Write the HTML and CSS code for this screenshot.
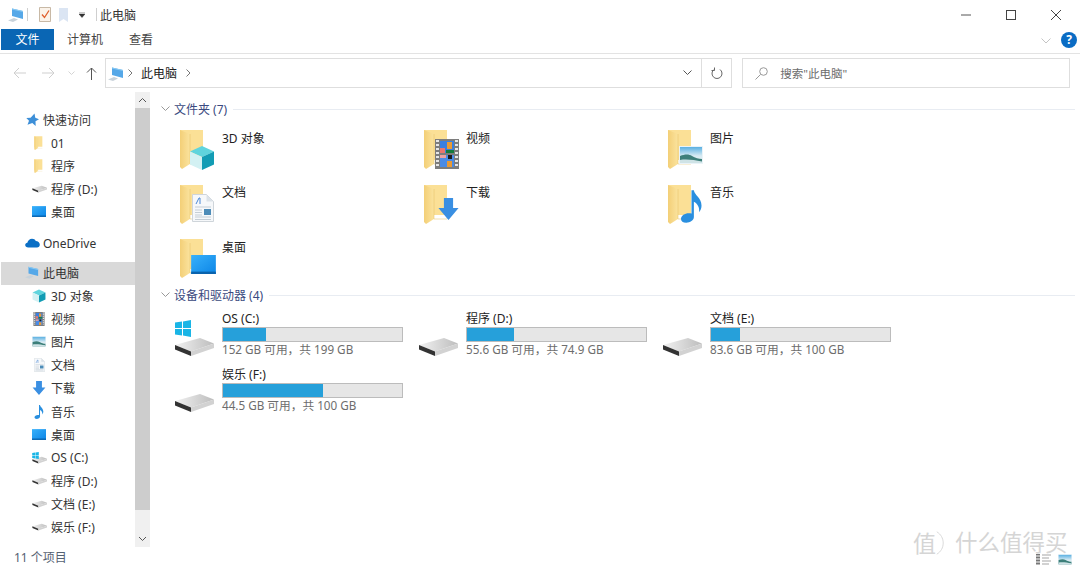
FILE: index.html
```html
<!DOCTYPE html>
<html lang="zh-CN">
<head>
<meta charset="utf-8">
<title>此电脑</title>
<link rel="stylesheet" href="styles.css">
</head>
<body>
<svg class="sprite" width="0" height="0" aria-hidden="true">
  <defs>
    <linearGradient id="gFolder" x1="0" y1="0" x2="1" y2="0"><stop offset="0" stop-color="#f3cf77"/><stop offset="1" stop-color="#fbe39e"/></linearGradient>
    <linearGradient id="gDrive" x1="0" y1="0" x2="1" y2="0"><stop offset="0" stop-color="#f2f2f2"/><stop offset="1" stop-color="#bdbdbd"/></linearGradient>
    <linearGradient id="gSky" x1="0" y1="0" x2="0" y2="1"><stop offset="0" stop-color="#5ab0e2"/><stop offset=".55" stop-color="#d6eaf2"/><stop offset="1" stop-color="#e8f1f2"/></linearGradient>
    <linearGradient id="gDesk" x1="0" y1="0" x2="1" y2="1"><stop offset="0" stop-color="#38b1fb"/><stop offset="1" stop-color="#0c85e6"/></linearGradient>
    <symbol id="folder" viewBox="0 0 24 40">
      <path d="M0 1h23v30H9L0 33z" fill="#fbe096"/>
      <path d="M0 1l10 4v30l-8 5-2-2z" fill="url(#gFolder)"/>
      <path d="M10 5v30H23" fill="none" stroke="#e3bd63" stroke-width=".5"/>
    </symbol>
    <symbol id="pc" viewBox="0 0 16 14">
      <path d="M4 .5l11 2.500v8L4 8z" fill="#56a8e8"/>
      <path d="M4 .5l11 2.500v1L4 1.500z" fill="#8ccbf3"/>
      <path d="M0 12.500l6-2.500 4 1.500-5 2.500z" fill="#c8d2da"/>
    </symbol>
    <symbol id="star" viewBox="0 0 14 14">
      <path d="M9 .5l.8 4.300 3.700 1.500-3.500 2 .2 4.700-3.400-3L2 11.800l1.500-4L.8 5l4.300-.3z" fill="#3d8fd8"/>
    </symbol>
    <symbol id="cloud" viewBox="0 0 16 10">
      <path d="M3.500 9.800C1.500 9.800.2 8.700.2 7.200c0-1.400 1-2.400 2.300-2.500C3 2.400 5 .5 7.500.5c1.800 0 3.300.9 4 2.300 2.200 0 4.300 1.800 4.300 4 0 1.700-1.300 3-3 3z" fill="#0b6fc5"/>
    </symbol>
    <symbol id="cube" viewBox="0 0 26 26">
      <path d="M13 1l12 5.500-12 5.500L1 6.500z" fill="#5fd4dd"/>
      <path d="M1 6.500l12 5.500v13L1 19.500z" fill="#d3f1f3"/>
      <path d="M25 6.500L13 12v13l12-5.500z" fill="#129cb4"/>
    </symbol>
    <symbol id="film" viewBox="0 0 24 30">
      <rect width="24" height="30" fill="#7d7d7d"/>
      <path d="M1 1h3v2H1zM1 5h3v2H1zM1 9h3v2H1zM1 13h3v2H1zM1 17h3v2H1zM1 21h3v2H1zM1 25h3v2H1zM20 1h3v2h-3zM20 5h3v2h-3zM20 9h3v2h-3zM20 13h3v2h-3zM20 17h3v2h-3zM20 21h3v2h-3zM20 25h3v2h-3z" fill="#e6e6e6"/>
      <rect x="5" y="2" width="14" height="12" fill="#3a7fe0"/>
      <rect x="5" y="16" width="14" height="12" fill="#4a8be6"/>
      <path d="M5 9h5v5H5z" fill="#e8766c"/><path d="M12 3h5v7h-5zM12 22h5v6h-5z" fill="#e99a35"/><path d="M11 11h8v3h-8z" fill="#127a3c"/><path d="M13 16h4v4h-4z" fill="#1c1c1c"/><path d="M5 16h6v3H5z" fill="#eba0a0"/>
    </symbol>
    <symbol id="picture" viewBox="0 0 24 18">
      <rect width="24" height="18" fill="#eaf3f8"/>
      <rect x="1" y="1" width="22" height="16" fill="url(#gSky)"/>
      <path d="M1 10c5-2 9-2 12 0s7 3 10 3v4H1z" fill="#3d7f7a"/>
      <path d="M1 14c7-1 14 0 22 1.500V17H1z" fill="#cfe3e6"/>
    </symbol>
    <symbol id="doc" viewBox="0 0 22 28">
      <path d="M.5.5h14l7 7v20H.500z" fill="#f6f8fa" stroke="#cfd5da"/>
      <path d="M14.500.5v7h7z" fill="#dbe2e8"/>
      <path d="M3 13h16M3 23h16M3 25.500h16" stroke="#c5ced6"/>
      <rect x="12" y="15" width="7" height="6" fill="#4d8cb8"/>
      <path d="M3 16h7M3 18.500h7M3 21h7" stroke="#c5ced6"/>
      <path d="M4 10l3-6h1v6" fill="none" stroke="#4a88d6"/>
    </symbol>
    <symbol id="down" viewBox="0 0 22 24">
      <path d="M6 0h10v11h6L11 24 0 11h6z" fill="#3a8fe2"/>
    </symbol>
    <symbol id="note" viewBox="0 0 22 34">
      <path d="M11 0h2.500c.5 5 8 8 8 16 0 3-1 5-2.500 7 .5-5-1.500-9-5.500-11v16c0 3.500-4 6-8 6-3.500 0-5.500-2-5.500-4 0-3.500 4-6 8-6 1 0 2 .1 3 .4z" fill="#2a8fdf"/>
    </symbol>
    <symbol id="desk" viewBox="0 0 26 20">
      <rect width="26" height="20" fill="url(#gDesk)"/>
      <path d="M0 17.500h26V20H0z" fill="#0a63ad"/>
    </symbol>
    <symbol id="drive" viewBox="0 0 40 20">
      <path d="M1 8l25-7 14 5.500-23 8z" fill="url(#gDrive)"/>
      <path d="M1 8l16 6.500V19L1 12.500z" fill="#333"/>
      <path d="M17 14.500l23-8V11l-23 8z" fill="#d2d2d2"/>
    </symbol>
    <symbol id="win" viewBox="0 0 16 17">
      <path d="M0 2.500L7 1.500V8H0zM8 1.400L16 0v8H8zM0 9h7v6.500L0 14.500zM8 9h8v8l-8-1.400z" fill="#19b5e6"/>
    </symbol>
    <symbol id="check" viewBox="0 0 12 15">
      <path d="M.5.500h11v14H.500z" fill="#fbf3ea" stroke="#c8b9a6"/>
      <path d="M3 7.500l2.500 3L10 3.500" fill="none" stroke="#df5f2c" stroke-width="1.300"/>
    </symbol>
    <symbol id="pin" viewBox="0 0 10 14">
      <path d="M0 0h9v14l-4.500-3L0 14z" fill="#dbe5f3"/>
    </symbol>
  </defs>
</svg>

<div class="app">
  <header class="titlebar">
    <svg class="i-pc-title"><use href="#pc"/></svg>
    <span class="qsep"></span>
    <svg class="i-check"><use href="#check"/></svg>
    <svg class="i-pin"><use href="#pin"/></svg>
    <svg class="i-caret" viewBox="0 0 6 6"><path d="M0 0h6M0 2h6L3 5.500z" fill="#333" stroke="#333" stroke-width=".5"/></svg>
    <span class="qsep qsep-2"></span>
    <span class="title">此电脑</span>
    <div class="winbtns">
      <svg class="wb" viewBox="0 0 10 10"><path d="M0 5h10" stroke="#555" fill="none"/></svg>
      <svg class="wb" viewBox="0 0 10 10"><rect x=".5" y=".5" width="9" height="9" stroke="#444" fill="none"/></svg>
      <svg class="wb" viewBox="0 0 10 10"><path d="M0 0l10 10M10 0L0 10" stroke="#444" fill="none"/></svg>
    </div>
  </header>

  <nav class="ribbon">
    <span class="tab tab-file">文件</span>
    <span class="tab tab-computer">计算机</span>
    <span class="tab tab-view">查看</span>
    <svg class="ribbon-chev" viewBox="0 0 10 6"><path d="M.5.500L5 5 9.500.500" fill="none" stroke="#c4c4c4"/></svg>
    <span class="help">?</span>
  </nav>

  <div class="addr-row">
    <svg class="nav-ic back" viewBox="0 0 13 12"><path d="M13 6H1M6 1L1 6l5 5" fill="none" stroke="#cfcfcf"/></svg>
    <svg class="nav-ic fwd" viewBox="0 0 13 12"><path d="M0 6h12M7 1l5 5-5 5" fill="none" stroke="#cfcfcf"/></svg>
    <svg class="nav-ic hist" viewBox="0 0 7 5"><path d="M.5.500l3 3 3-3" fill="none" stroke="#d4d4d4"/></svg>
    <svg class="nav-ic up" viewBox="0 0 11 13"><path d="M5.500 13V1M1 5.500L5.500 1 10 5.500" fill="none" stroke="#555"/></svg>
    <div class="addr">
      <svg class="i-pc-addr"><use href="#pc"/></svg>
      <svg class="crumb-chev" viewBox="0 0 5 8"><path d="M.5.500L4 4 .5 7.500" fill="none" stroke="#777"/></svg>
      <span class="crumb">此电脑</span>
      <svg class="crumb-chev" viewBox="0 0 5 8"><path d="M.5.500L4 4 .5 7.500" fill="none" stroke="#777"/></svg>
      <svg class="addr-drop" viewBox="0 0 9 6"><path d="M.5.500L4.500 4.500 8.500.500" fill="none" stroke="#555"/></svg>
      <div class="refresh">
        <svg viewBox="0 0 12 13" width="12" height="13"><path d="M3 2.500a5 5 0 1 0 6 0M3.500 .5v3h-3" fill="none" stroke="#666"/></svg>
      </div>
    </div>
    <div class="search">
      <svg viewBox="0 0 13 13" width="13" height="13"><circle cx="8.500" cy="4.500" r="3.800" fill="none" stroke="#999"/><path d="M5.500 7.500L.5 12.500" stroke="#999"/></svg>
      <span>搜索"此电脑"</span>
    </div>
  </div>

  <div class="main">
    <aside class="side">
      <ul class="tree">
        <li class="row l1"><svg class="ic"><use href="#star"/></svg>快速访问</li>
        <li class="row l2"><svg class="ic"><use href="#folder" x="2" width="9" height="14"/></svg>01</li>
        <li class="row l2"><svg class="ic"><use href="#folder" x="2" width="9" height="14"/></svg>程序</li>
        <li class="row l2"><svg class="ic"><use href="#drive" y="3" width="15" height="8"/></svg>程序 (D:)</li>
        <li class="row l2"><svg class="ic"><use href="#desk" y="1" width="14" height="11"/></svg>桌面</li>
        <li class="row l1 gap"><svg class="ic"><use href="#cloud" y="2" width="15" height="10"/></svg>OneDrive</li>
        <li class="row l1 gap sel"><svg class="ic"><use href="#pc" width="14" height="13"/></svg>此电脑</li>
        <li class="row l2"><svg class="ic"><use href="#cube" width="14" height="14"/></svg>3D 对象</li>
        <li class="row l2"><svg class="ic"><use href="#film" x="1" width="12" height="14"/></svg>视频</li>
        <li class="row l2"><svg class="ic"><use href="#picture" y="1" width="14" height="11"/></svg>图片</li>
        <li class="row l2"><svg class="ic"><use href="#doc" x="2" width="11" height="14"/></svg>文档</li>
        <li class="row l2"><svg class="ic"><use href="#down" width="14" height="14"/></svg>下载</li>
        <li class="row l2"><svg class="ic"><use href="#note" x="2" width="10" height="14"/></svg>音乐</li>
        <li class="row l2"><svg class="ic"><use href="#desk" y="1" width="14" height="11"/></svg>桌面</li>
        <li class="row l2"><svg class="ic"><use href="#drive" y="5" width="15" height="8"/><use href="#win" y="1" width="7" height="7"/></svg>OS (C:)</li>
        <li class="row l2"><svg class="ic"><use href="#drive" y="3" width="15" height="8"/></svg>程序 (D:)</li>
        <li class="row l2"><svg class="ic"><use href="#drive" y="3" width="15" height="8"/></svg>文档 (E:)</li>
        <li class="row l2"><svg class="ic"><use href="#drive" y="3" width="15" height="8"/></svg>娱乐 (F:)</li>
      </ul>
      <div class="scroll">
        <svg class="sc-btn" viewBox="0 0 15 16"><path d="M4 10l3.500-3.500L11 10" fill="none" stroke="#555"/></svg>
        <div class="sc-thumb"></div>
        <div class="sc-track"></div>
        <svg class="sc-btn" viewBox="0 0 15 16"><path d="M4 6l3.500 3.500L11 6" fill="none" stroke="#555"/></svg>
      </div>
    </aside>

    <section class="content">
      <h2 class="group">
        <svg viewBox="0 0 9 6" width="9" height="6"><path d="M.5.500L4.500 4.500 8.500.500" fill="none" stroke="#999"/></svg>
        <span>文件夹 (7)</span><i></i>
      </h2>
      <div class="folders">
        <div class="fitem"><svg class="big"><use href="#folder" x="5" y="1" width="24" height="40"/><use href="#cube" x="14" y="17" width="26" height="26"/></svg><span>3D 对象</span></div>
        <div class="fitem"><svg class="big"><use href="#folder" x="5" y="1" width="24" height="40"/><use href="#film" x="16" y="11" width="24" height="30"/></svg><span>视频</span></div>
        <div class="fitem"><svg class="big"><use href="#folder" x="5" y="1" width="24" height="40"/><use href="#picture" x="16" y="18" width="24" height="18"/></svg><span>图片</span></div>
        <div class="fitem"><svg class="big"><use href="#folder" x="5" y="1" width="24" height="40"/><use href="#doc" x="17" y="11" width="22" height="28"/></svg><span>文档</span></div>
        <div class="fitem"><svg class="big"><use href="#folder" x="5" y="1" width="24" height="40"/><use href="#down" x="19" y="15" width="21" height="22"/></svg><span>下载</span></div>
        <div class="fitem"><svg class="big"><use href="#folder" x="5" y="1" width="24" height="40"/><use href="#note" x="18" y="7" width="21" height="33"/></svg><span>音乐</span></div>
        <div class="fitem"><svg class="big"><use href="#folder" x="5" y="1" width="24" height="40"/><use href="#desk" x="16" y="18" width="25" height="19"/></svg><span>桌面</span></div>
      </div>

      <h2 class="group">
        <svg viewBox="0 0 9 6" width="9" height="6"><path d="M.5.500L4.500 4.500 8.500.500" fill="none" stroke="#999"/></svg>
        <span>设备和驱动器 (4)</span><i></i>
      </h2>
      <div class="drives">
        <div class="ditem">
          <svg class="dic"><use href="#drive" y="23" width="40" height="20"/><use href="#win" x="1" y="6" width="16" height="17"/></svg>
          <div class="dinfo"><div class="dname">OS (C:)</div><div class="bar"><div class="fill" style="width:24%"></div></div><div class="dsub">152 GB 可用，共 199 GB</div></div>
        </div>
        <div class="ditem">
          <svg class="dic"><use href="#drive" y="23" width="40" height="20"/></svg>
          <div class="dinfo"><div class="dname">程序 (D:)</div><div class="bar"><div class="fill" style="width:26%"></div></div><div class="dsub">55.6 GB 可用，共 74.9 GB</div></div>
        </div>
        <div class="ditem">
          <svg class="dic"><use href="#drive" y="23" width="40" height="20"/></svg>
          <div class="dinfo"><div class="dname">文档 (E:)</div><div class="bar"><div class="fill" style="width:16%"></div></div><div class="dsub">83.6 GB 可用，共 100 GB</div></div>
        </div>
        <div class="ditem">
          <svg class="dic"><use href="#drive" y="23" width="40" height="20"/></svg>
          <div class="dinfo"><div class="dname">娱乐 (F:)</div><div class="bar"><div class="fill" style="width:56%"></div></div><div class="dsub">44.5 GB 可用，共 100 GB</div></div>
        </div>
      </div>
    </section>
  </div>

  <footer class="status">
    <span>11 个项目</span>
    <div class="views">
      <svg viewBox="0 0 15 11" width="15" height="11"><path d="M0 .5h4M0 3.500h4M0 6.500h4M0 9.500h4" stroke="#777" stroke-width="2"/><path d="M6 1h9M6 4h7M6 7h9M6 10h7" stroke="#a5a5a5"/></svg>
      <svg viewBox="0 0 14 11" width="14" height="11"><use href="#picture" width="14" height="11"/></svg>
    </div>
  </footer>

  <div class="watermark">
    <span class="wm-mark">值<svg viewBox="0 0 10 30" width="8" height="28"><path d="M1 1c5 3 8 8 8 14s-3 11-8 14" fill="none" stroke="#d0d0d0"/></svg></span>
    <span class="wm-text">什么值得买</span>
  </div>
</div>
</body>
</html>
```

FILE: styles.css
```css
* { box-sizing: border-box; margin: 0; padding: 0; }
html, body { width: 1080px; height: 569px; overflow: hidden; background: #fff; }
body { font-family: "Noto Sans", "Noto Sans CJK SC", sans-serif; font-size: 12px; color: #222; }
.sprite { position: absolute; }
svg { display: block; flex: none; }

.app { position: relative; width: 1080px; height: 569px; display: flex; flex-direction: column; }

/* title bar */
.titlebar { height: 29px; display: flex; align-items: center; padding-left: 8px; }
.i-pc-title { width: 16px; height: 14px; }
.qsep { width: 1px; height: 13px; background: #cfcfcf; margin-left: 3px; }
.qsep-2 { margin-left: 11px; }
.i-check { width: 12px; height: 15px; margin-left: 11px; }
.i-pin { width: 10px; height: 14px; margin-left: 8px; }
.i-caret { width: 6px; height: 6px; margin-left: 10px; }
.title { margin-left: 3px; font-size: 12px; color: #333; }
.winbtns { margin-left: auto; display: flex; gap: 35px; padding-right: 19px; }
.wb { width: 10px; height: 10px; }

/* ribbon */
.ribbon { height: 25px; display: flex; align-items: flex-start; border-bottom: 1px solid #e3e3e3; position: relative; }
.tab { height: 21px; line-height: 22px; font-size: 12px; color: #444; }
.tab-file { width: 53px; margin-left: 1px; background: #0a66b4; color: #fff; text-align: center; line-height: 21px; }
.tab-computer { margin-left: 13px; }
.tab-view { margin-left: 26px; }
.ribbon-chev { width: 10px; height: 6px; margin: 9px 0 0 auto; }
.help { width: 16px; height: 16px; margin: 3px 3px 0 10px; border-radius: 50%; background: #0a6cc4; color: #fff; font-size: 12px; font-weight: 700; line-height: 16px; text-align: center; }

/* address row */
.addr-row { height: 38px; display: flex; align-items: center; padding: 0 10px 0 13px; }
.nav-ic { flex: none; }
.back { width: 13px; height: 12px; }
.fwd { width: 13px; height: 12px; margin-left: 16px; }
.hist { width: 7px; height: 5px; margin-left: 13px; }
.up { width: 11px; height: 13px; margin-left: 11px; }
.addr { width: 628px; height: 30px; margin-left: 8px; border: 1px solid #dedede; display: flex; align-items: center; padding-left: 2px; }
.i-pc-addr { width: 16px; height: 14px; margin-top: 1px; }
.crumb-chev { width: 5px; height: 8px; margin-left: 4px; }
.crumb { margin-left: 8px; color: #222; }
.crumb + .crumb-chev { margin-left: 9px; }
.addr-drop { width: 9px; height: 6px; margin-left: auto; margin-right: 9px; }
.refresh { width: 30px; height: 28px; border-left: 1px solid #dedede; display: flex; align-items: center; justify-content: center; }
.search { width: 328px; height: 30px; margin-left: 10px; border: 1px solid #dedede; display: flex; align-items: center; padding-left: 12px; gap: 12px; color: #6d6d6d; font-size: 11.500px; }

/* main */
.main { height: 455px; display: flex; }
.side { width: 150px; flex: none; display: flex; }
.tree { width: 135px; list-style: none; padding: 16.500px 0 0 1px; }
.row { height: 23.100px; display: flex; align-items: center; white-space: nowrap; color: #333; }
.l1 { padding-left: 24px; }
.l2 { padding-left: 31px; }
.ic { width: 15px; height: 14px; margin-right: 5px; }
.l1 .ic { margin-right: 3px; }
.l2 .ic { margin-right: 4px; }
.gap { margin-top: 7.500px; }
.sel { background: #d9d9d9; height: 22.500px; }
.scroll { width: 15px; display: flex; flex-direction: column; background: #f0f0f0; }
.sc-btn { width: 15px; height: 16px; }
.sc-thumb { height: 402px; background: #cdcdcd; }
.sc-track { flex: 1; }

/* content */
.content { flex: 1; padding: 8px 5px 0 11px; min-width: 0; }
.group { height: 18px; display: flex; align-items: center; font-size: 12px; font-weight: 400; color: #3a4a80; }
.group span { margin-left: 4px; white-space: nowrap; }
.group i { flex: 1; height: 1px; background: #e8ecf2; margin-left: 6px; }
.folders { display: grid; grid-template-columns: repeat(3, 244px); grid-auto-rows: 54.500px; padding: 5px 0 0 14px; margin-bottom: -0.500px; }
.fitem { display: flex; align-items: flex-start; }
.fitem span { margin-left: 5px; line-height: 18px; margin-top: 6.500px; color: #222; }
.big { width: 42px; height: 46px; margin-top: 5px; }
.drives { display: grid; grid-template-columns: repeat(3, 244px); grid-auto-rows: 56px; padding: 4px 0 0 13px; }
.ditem { display: flex; align-items: flex-start; }
.dic { width: 41px; height: 46px; margin-top: 6px; }
.dinfo { width: 181px; margin-left: 7px; }
.dname { height: 17px; line-height: 18px; margin-top: 2px; color: #222; }
.bar { height: 15px; border: 1px solid #bcbcbc; background: #e6e6e6; }
.fill { height: 100%; background: #26a0da; }
.dsub { line-height: 15px; color: #6d6d6d; white-space: nowrap; font-size: 11.700px; }

/* status */
.status { height: 22px; display: flex; align-items: center; justify-content: space-between; padding: 0 8px 2px 14px; color: #556172; }
.views { display: flex; gap: 7px; margin-top: 5px; }

/* watermark overlay */
.watermark { position: absolute; left: 913px; top: 529px; display: flex; align-items: center; gap: 11px; color: #d5d5d5; pointer-events: none; }
.wm-mark { display: flex; align-items: center; font-size: 23px; line-height: 28px; }
.wm-text { font-size: 22.500px; line-height: 28px; }
```
